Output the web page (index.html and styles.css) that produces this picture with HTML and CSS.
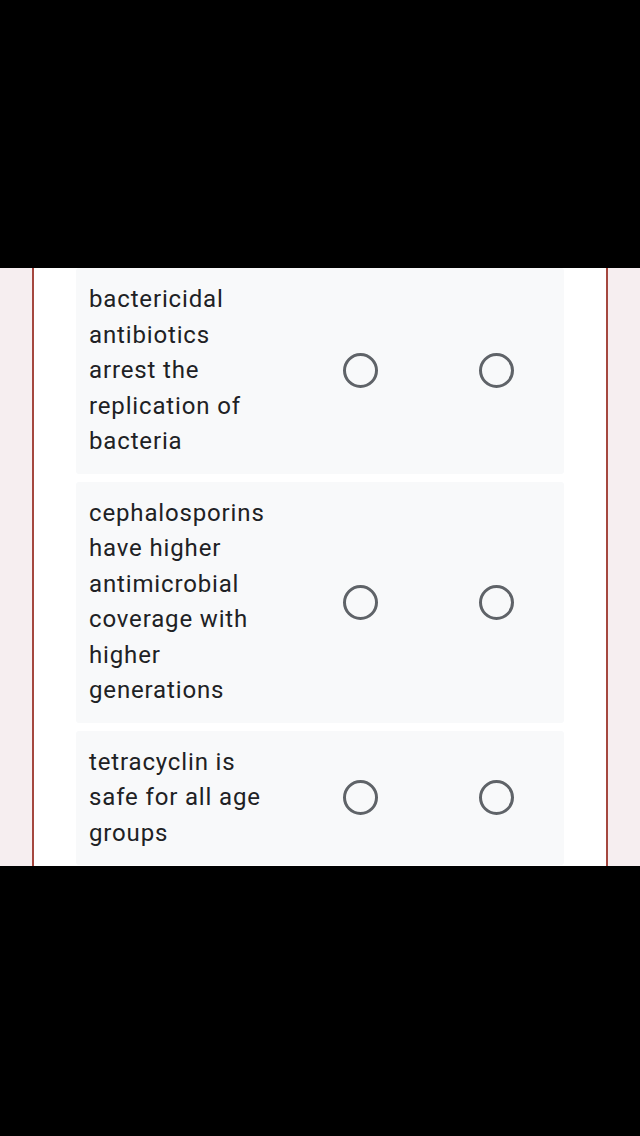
FILE: index.html
```html
<!DOCTYPE html>
<html>
<head>
<meta charset="utf-8">
<link rel="stylesheet" href="styles.css">
</head>
<body>
<div class="screen">
  <div class="bar bar-top"></div>
  <div class="viewport">
    <div class="card">
      <div class="list">
        <div class="row">
          <div class="question">bactericidal antibiotics arrest the replication of bacteria</div>
          <div class="cell"><span class="radio"></span></div>
          <div class="cell"><span class="radio"></span></div>
        </div>
        <div class="row">
          <div class="question">cephalosporins have higher antimicrobial coverage with higher generations</div>
          <div class="cell"><span class="radio"></span></div>
          <div class="cell"><span class="radio"></span></div>
        </div>
        <div class="row">
          <div class="question">tetracyclin is safe for all age groups</div>
          <div class="cell"><span class="radio"></span></div>
          <div class="cell"><span class="radio"></span></div>
        </div>
      </div>
    </div>
  </div>
  <div class="bar bar-bottom"></div>
</div>
</body>
</html>
```
FILE: styles.css
```css
html, body {
  margin: 0;
  padding: 0;
  background: #000;
}
.screen {
  width: 640px;
  height: 1136px;
  display: flex;
  flex-direction: column;
  overflow: hidden;
}
.bar {
  background: #000;
  flex: none;
}
.bar-top { height: 268px; }
.bar-bottom { height: 270px; }
.viewport {
  height: 598px;
  flex: none;
  background: #f6eef0;
  padding: 0 32px;
  overflow: hidden;
}
.card {
  height: 100%;
  background: #fff;
  border-left: 2px solid #a5473f;
  border-right: 2px solid #a5473f;
  padding: 0 42px;
}
.list {
  display: flex;
  flex-direction: column;
  gap: 8px;
}
.row {
  display: grid;
  grid-template-columns: 216px 136px 136px;
  align-items: center;
  background: #f8f9fa;
  border-radius: 3px;
  padding: 14px 0 14px;
}
.question {
  padding: 0 13px 0 13px;
  font-family: Roboto, "Noto Sans", sans-serif;
  font-size: 24px;
  line-height: 35.5px;
  color: #202124;
  letter-spacing: 0.85px;
}
.cell {
  display: flex;
  justify-content: center;
  align-items: center;
}
.radio {
  width: 29px;
  height: 29px;
  border: 3px solid #5f6368;
  border-radius: 50%;
  display: block;
}
```
